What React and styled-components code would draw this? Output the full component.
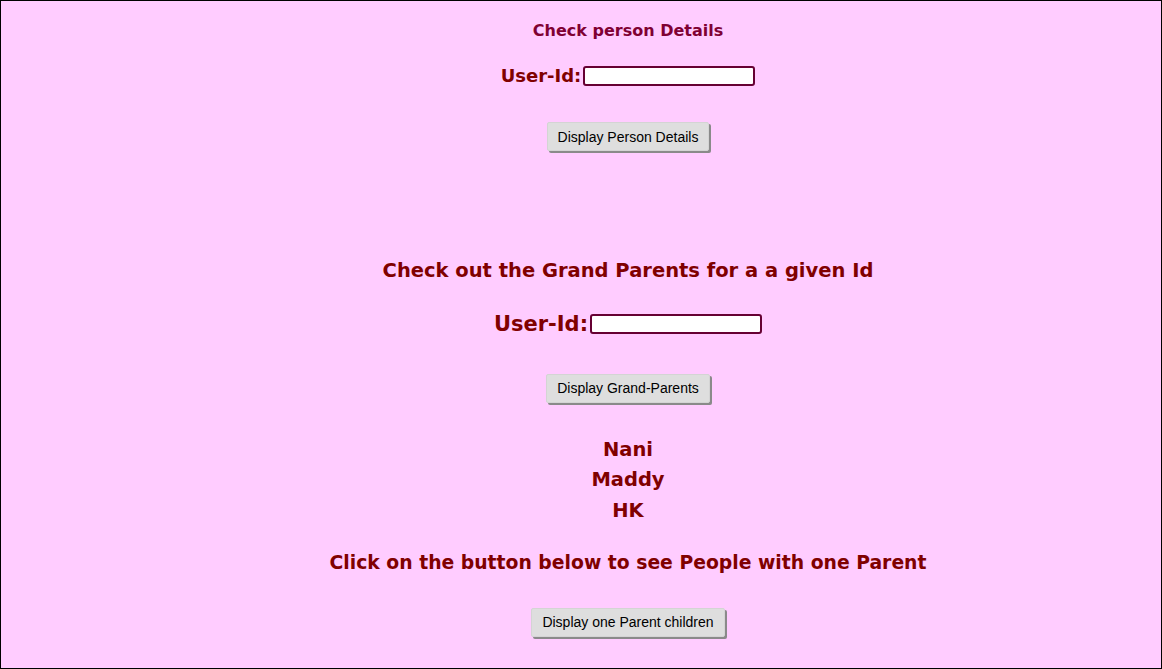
import React from 'react'
import styled, { createGlobalStyle } from 'styled-components'

const GlobalStyle = createGlobalStyle`
  html, body {
    margin: 0;
    padding: 0;
    background: #ffccff;
  }
`

const StyledPage = styled.div`
  box-sizing: border-box;
  width: 1162px;
  height: 669px;
  padding-left: 94px;
  border: 1px solid #000;
  background: #ffccff;
  display: flex;
  flex-direction: column;
  align-items: center;
  font-family: "DejaVu Sans", sans-serif;
  font-weight: bold;
  color: #800000;
  overflow: hidden;
`
const StyledTitle = styled.h3`
  margin: ${(p) => p.$margin || '0'};
  font-size: ${(p) => p.$size || '18px'};
  line-height: 1.2;
  color: ${(p) => p.$color || '#800000'};
  white-space: nowrap;
`
const StyledRow = styled.div`
  display: flex;
  align-items: center;
  margin: ${(p) => p.$margin || '0'};
`
const StyledLabel = styled.label`
  font-size: ${(p) => p.$size || '18px'};
  color: #800000;
  line-height: 1;
`
const StyledInput = styled.input`
  box-sizing: border-box;
  width: 172px;
  height: 20px;
  margin-left: 2px;
  border: 2px solid #660033;
  border-radius: 3px;
  background: #fff;
  padding: 0 2px;
`
const StyledButton = styled.button`
  box-sizing: border-box;
  height: 29px;
  margin: ${(p) => p.$margin || '0'};
  padding: 0 10px;
  font-family: "Liberation Sans", Arial, sans-serif;
  font-size: 14px;
  font-weight: normal;
  color: #000;
  background: #dedede;
  border: 1px solid #d4d4d4;
  border-radius: 2px;
  box-shadow: 2px 2px 0 #8a8a8a;
  cursor: pointer;
`
const StyledList = styled.div`
  display: flex;
  flex-direction: column;
  align-items: center;
  margin: ${(p) => p.$margin || '0'};
`
const StyledName = styled.div`
  font-size: 19.5px;
  line-height: 30.5px;
  color: #800000;
`

const App = () => {
  return (
    <>
      <GlobalStyle />
      <StyledPage>
        <StyledTitle $size="16px" $color="#800033" $margin="20px 0 0">
          Check person Details
        </StyledTitle>
        <StyledRow $margin="26px 0 0">
          <StyledLabel $size="18px">User-Id:</StyledLabel>
          <StyledInput type="text" />
        </StyledRow>
        <StyledButton $margin="36px 0 0">Display Person Details</StyledButton>

        <StyledTitle $size="19.5px" $margin="108px 0 0">
          Check out the Grand Parents for a a given Id
        </StyledTitle>
        <StyledRow $margin="31px 0 0">
          <StyledLabel $size="21px">User-Id:</StyledLabel>
          <StyledInput type="text" />
        </StyledRow>
        <StyledButton $margin="39px 0 0">Display Grand-Parents</StyledButton>

        <StyledList $margin="32px 0 0">
          <StyledName>Nani</StyledName>
          <StyledName>Maddy</StyledName>
          <StyledName>HK</StyledName>
        </StyledList>

        <StyledTitle $size="18.8px" $margin="26px 0 0">
          Click on the button below to see People with one Parent
        </StyledTitle>
        <StyledButton $margin="33px 0 0">Display one Parent children</StyledButton>
      </StyledPage>
    </>
  )
}

export default App
